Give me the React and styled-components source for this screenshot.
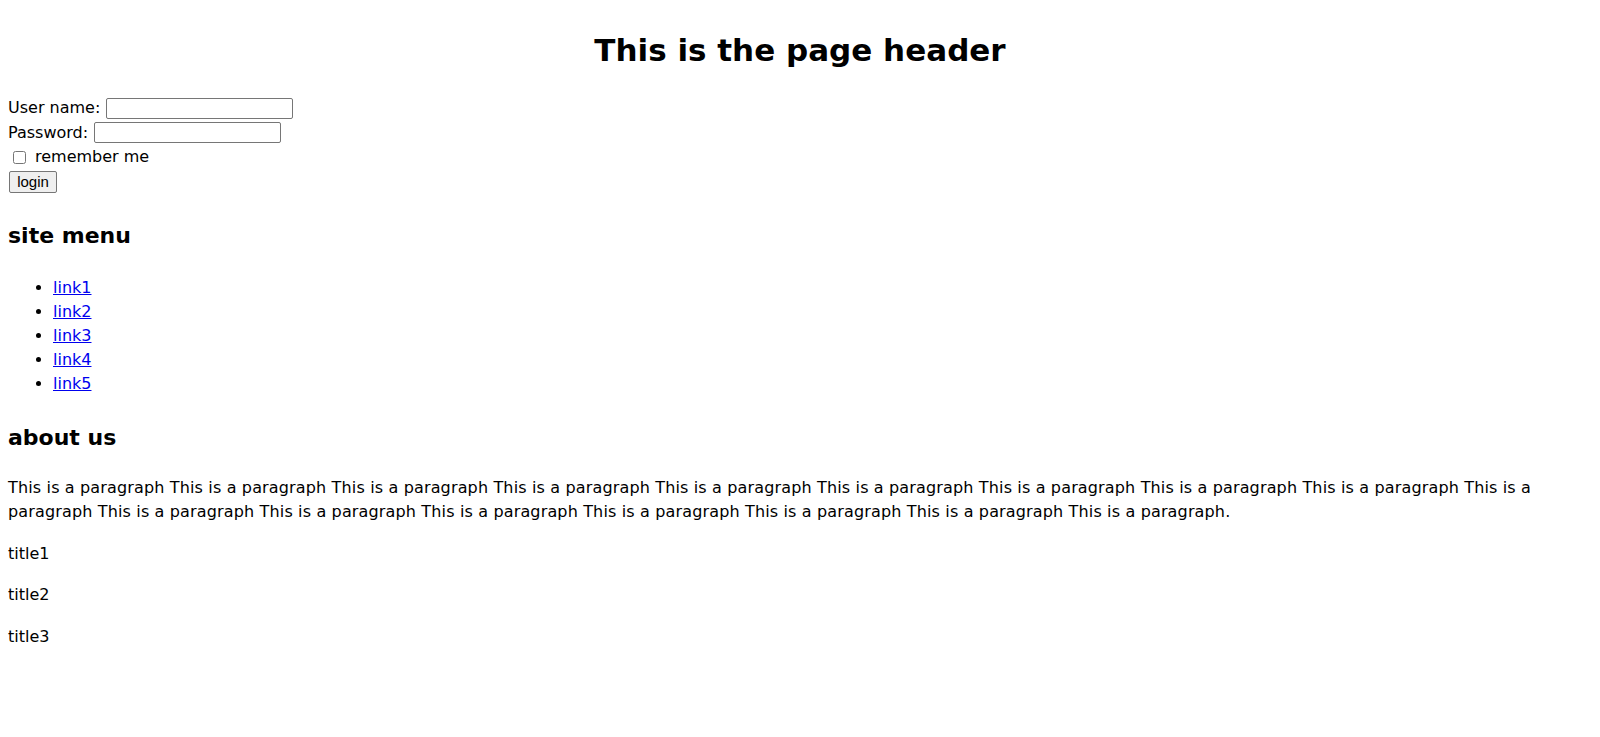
import React from 'react'
import styled, { createGlobalStyle } from 'styled-components'

const GlobalStyle = createGlobalStyle`
  html, body {
    margin: 0;
    padding: 0;
    background: #ffffff;
  }
  body {
    font-family: "DejaVu Sans", "Comic Sans MS", sans-serif;
    font-size: 16px;
    color: #000000;
  }
`

const Page = styled.div`
  padding: 0 8px;
`

const Header = styled.h1`
  margin: 32px 0 0;
  font-size: 31px;
  line-height: 36px;
  font-weight: 700;
  text-align: center;
`

const LoginForm = styled.form`
  margin-top: 28px;
  display: flex;
  flex-direction: column;
`

const Row = styled.div`
  display: flex;
  align-items: center;
  height: 24.5px;
  line-height: 24px;
  gap: ${p => p.$gap || 0}px;
`

const TextInput = styled.input`
  box-sizing: border-box;
  width: 187px;
  height: 21px;
  margin: 0;
  padding: 1px 2px;
  border: 1px solid #767676;
  border-radius: 2px;
  background: #ffffff;
  font: 13.33px "Liberation Sans", Arial, sans-serif;
`

const Check = styled.input`
  width: 13px;
  height: 13px;
  margin: 0 3px 0 5px;
`

const CheckLabel = styled.label`
  margin-left: 6px;
`

const LoginButton = styled.button`
  box-sizing: border-box;
  width: 48px;
  height: 22px;
  margin: 0 0 0 1px;
  padding: 0;
  border: 1px solid #767676;
  border-radius: 2px;
  background: #efefef;
  color: #000000;
  font: 15px/20px "Liberation Sans", Arial, sans-serif;
`

const SectionTitle = styled.h2`
  margin: ${p => p.$top}px 0 0;
  font-size: 22px;
  line-height: 30px;
  font-weight: 700;
`

const Menu = styled.ul`
  margin: 25px 0 0;
  padding-left: 45px;
  line-height: 24px;
`

const MenuLink = styled.a`
  color: #0000ee;
  text-decoration: underline;
`

const Paragraph = styled.p`
  margin: ${p => p.$top}px 0 0;
  line-height: 24px;
  letter-spacing: ${p => p.$spaced ? '0.15px' : 'normal'};
`

const links = ['link1', 'link2', 'link3', 'link4', 'link5']
const text = Array(17).fill('This is a paragraph').join(' ') + '.'

const App = () => {
  return (
    <Page>
      <GlobalStyle />
      <Header>This is the page header</Header>
      <LoginForm onSubmit={e => e.preventDefault()}>
        <Row $gap={6}>
          <span>User name:</span>
          <TextInput type="text" />
        </Row>
        <Row $gap={6}>
          <span>Password:</span>
          <TextInput type="password" />
        </Row>
        <Row>
          <Check type="checkbox" id="remember" />
          <CheckLabel htmlFor="remember">remember me</CheckLabel>
        </Row>
        <Row>
          <LoginButton type="submit">login</LoginButton>
        </Row>
      </LoginForm>

      <SectionTitle $top={26.7}>site menu</SectionTitle>
      <Menu>
        {links.map(l => (
          <li key={l}><MenuLink href="#">{l}</MenuLink></li>
        ))}
      </Menu>

      <SectionTitle $top={27.3}>about us</SectionTitle>
      <Paragraph $top={22.6} $spaced>{text}</Paragraph>
      <Paragraph $top={18.7}>title1</Paragraph>
      <Paragraph $top={16.7}>title2</Paragraph>
      <Paragraph $top={18}>title3</Paragraph>
    </Page>
  )
}

export default App
